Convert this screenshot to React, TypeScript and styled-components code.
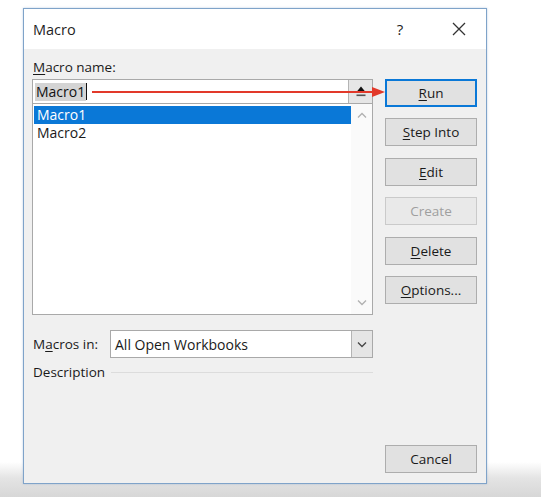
import React from "react";
import styled, { createGlobalStyle } from "styled-components";

const Global = createGlobalStyle`
  html, body { margin: 0; padding: 0; }
  body { font-family: "Open Sans", "Noto Sans", sans-serif; color: #1a1a1a; }
`;

const Page = styled.div`
  position: relative;
  width: 541px;
  height: 497px;
  box-sizing: border-box;
  padding: 8px 0 0 23px;
  background: linear-gradient(to bottom, #ffffff 0px, #ffffff 462px, #e4e4e4 478px, #d7d7d7 497px);
  overflow: hidden;
`;

const Window = styled.div`
  width: 464px;
  height: 476px;
  box-sizing: border-box;
  border: 1px solid #7fa3c9;
  box-shadow: 0 0 2px rgba(120, 160, 200, 0.5);
  display: flex;
  flex-direction: column;
  background: #f0f0f0;
`;

const TitleBar = styled.div`
  height: 40px;
  flex: none;
  background: #ffffff;
  display: flex;
  align-items: center;
  padding-left: 9px;
  font-size: 14.5px;
  color: #1f1f1f;
`;

const TitleText = styled.div`
  flex: 1;
`;

const TitleButton = styled.div<{ $w: number }>`
  width: ${(p) => p.$w}px;
  display: flex;
  align-items: center;
  justify-content: center;
  font-size: 15px;
  color: #222;
`;

const Body = styled.div`
  flex: 1;
  display: flex;
  gap: 12px;
  padding: 8px 9px 10px 8px;
`;

const LeftCol = styled.div`
  width: 341px;
  display: flex;
  flex-direction: column;
`;

const RightCol = styled.div`
  width: 92px;
  display: flex;
  flex-direction: column;
  gap: 11.4px;
  padding-top: 22px;
`;

const Label = styled.div`
  height: 22px;
  font-size: 13.5px;
  line-height: 20px;
  padding-left: 1px;
`;

const Key = styled.span`
  text-decoration: underline;
  text-underline-offset: 2px;
`;

const NameInput = styled.div`
  height: 25px;
  box-sizing: border-box;
  border: 1px solid #a9a9a9;
  background: #fff;
  display: flex;
  align-items: center;
`;

const InputText = styled.div`
  flex: 1;
  display: flex;
  align-items: center;
  padding-left: 2px;
  font-size: 14px;
`;

const Selected = styled.span`
  background: #d4d4d4;
  padding: 0 1px;
  line-height: 18px;
  color: #111;
`;

const Caret = styled.span`
  width: 1px;
  height: 17px;
  background: #111;
`;

const RefButton = styled.div`
  width: 24px;
  height: 23px;
  box-sizing: border-box;
  border-left: 1px solid #b4b4b4;
  background: #e6e6e6;
  display: flex;
  align-items: center;
  justify-content: center;
`;

const ListBox = styled.div`
  height: 211px;
  box-sizing: border-box;
  border: 1px solid #a9a9a9;
  border-top: none;
  background: #fff;
  display: flex;
`;

const Items = styled.div`
  flex: 1;
  padding-top: 2px;
  padding-left: 1px;
`;

const Item = styled.div<{ $selected?: boolean }>`
  height: 18px;
  line-height: 18px;
  font-size: 14px;
  padding-left: 3px;
  background: ${(p) => (p.$selected ? "#0a78d7" : "transparent")};
  color: ${(p) => (p.$selected ? "#fff" : "#1a1a1a")};
`;

const ScrollBar = styled.div`
  width: 21px;
  background: #fafafa;
  display: flex;
  flex-direction: column;
  justify-content: space-between;
  align-items: center;
  padding: 8px 0 8px;
`;

const ComboRow = styled.div`
  margin-top: 15px;
  height: 28px;
  display: flex;
  align-items: center;
`;

const ComboLabel = styled.div`
  width: 77px;
  font-size: 13.5px;
  padding-left: 1px;
`;

const Combo = styled.div`
  flex: 1;
  height: 28px;
  box-sizing: border-box;
  border: 1px solid #a9a9a9;
  background: #fff;
  display: flex;
  align-items: stretch;
`;

const ComboText = styled.div`
  flex: 1;
  display: flex;
  align-items: center;
  padding-left: 4px;
  font-size: 14px;
`;

const ComboButton = styled.div`
  width: 20px;
  border-left: 1px solid #b4b4b4;
  background: #e5e5e5;
  display: flex;
  align-items: center;
  justify-content: center;
`;

const DescRow = styled.div`
  margin-top: 5px;
  height: 18px;
  display: flex;
  align-items: center;
  gap: 6px;
  font-size: 13.5px;
  padding-left: 1px;
`;

const Rule = styled.div`
  flex: 1;
  height: 1px;
  background: #dcdcdc;
`;

const Button = styled.div<{ $default?: boolean; $disabled?: boolean; $bottom?: boolean }>`
  height: 28px;
  box-sizing: border-box;
  display: flex;
  align-items: center;
  justify-content: center;
  font-size: 13.5px;
  background: ${(p) => (p.$disabled ? "#e9e9e9" : "#e1e1e1")};
  color: ${(p) => (p.$disabled ? "#9f9f9f" : "#1a1a1a")};
  border: ${(p) => (p.$default ? "2px solid #0a78d7" : p.$disabled ? "1px solid #cacaca" : "1px solid #adadad")};
  margin-top: ${(p) => (p.$bottom ? "auto" : "0")};
`;

const Arrow = styled.svg`
  position: absolute;
  left: 92px;
  top: 86px;
`;

const UpIcon = () => (
  <svg width="12" height="13" viewBox="0 0 12 13">
    <polygon points="1.5,7 6,1.5 10.5,7" fill="#111" />
    <rect x="1.5" y="9.5" width="9" height="1.6" fill="#555" />
  </svg>
);

const Chevron = ({ up, color }: { up?: boolean; color: string }) => (
  <svg width="10" height="7" viewBox="0 0 10 7">
    <polyline
      points={up ? "1,5.5 5,1.5 9,5.5" : "1,1.5 5,5.5 9,1.5"}
      fill="none"
      stroke={color}
      strokeWidth="1.3"
    />
  </svg>
);

export default function App() {
  return (
    <>
      <Global />
      <Page>
        <Window>
          <TitleBar>
            <TitleText>Macro</TitleText>
            <TitleButton $w={30}>?</TitleButton>
            <TitleButton $w={16} />
            <TitleButton $w={55}>
              <svg width="14" height="14" viewBox="0 0 14 14">
                <path d="M1 1 L13 13 M13 1 L1 13" stroke="#333" strokeWidth="1.3" />
              </svg>
            </TitleButton>
          </TitleBar>
          <Body>
            <LeftCol>
              <Label>
                <Key>M</Key>acro name:
              </Label>
              <NameInput>
                <InputText>
                  <Selected>Macro1</Selected>
                  <Caret />
                </InputText>
                <RefButton>
                  <UpIcon />
                </RefButton>
              </NameInput>
              <ListBox>
                <Items>
                  <Item $selected>Macro1</Item>
                  <Item>Macro2</Item>
                </Items>
                <ScrollBar>
                  <Chevron up color="#b0b0b0" />
                  <Chevron color="#b0b0b0" />
                </ScrollBar>
              </ListBox>
              <ComboRow>
                <ComboLabel>
                  M<Key>a</Key>cros in:
                </ComboLabel>
                <Combo>
                  <ComboText>All Open Workbooks</ComboText>
                  <ComboButton>
                    <Chevron color="#444" />
                  </ComboButton>
                </Combo>
              </ComboRow>
              <DescRow>
                Description
                <Rule />
              </DescRow>
            </LeftCol>
            <RightCol>
              <Button $default>
                <Key>R</Key>un
              </Button>
              <Button>
                <Key>S</Key>tep Into
              </Button>
              <Button>
                <Key>E</Key>dit
              </Button>
              <Button $disabled>Create</Button>
              <Button>
                <Key>D</Key>elete
              </Button>
              <Button>
                <Key>O</Key>ptions...
              </Button>
              <Button $bottom>Cancel</Button>
            </RightCol>
          </Body>
        </Window>
        <Arrow width="295" height="12" viewBox="0 0 295 12">
          <line x1="0" y1="6" x2="282" y2="6" stroke="#e2392a" strokeWidth="2" />
          <polygon points="280,1 293,6 280,11" fill="#e2392a" />
        </Arrow>
      </Page>
    </>
  );
}
